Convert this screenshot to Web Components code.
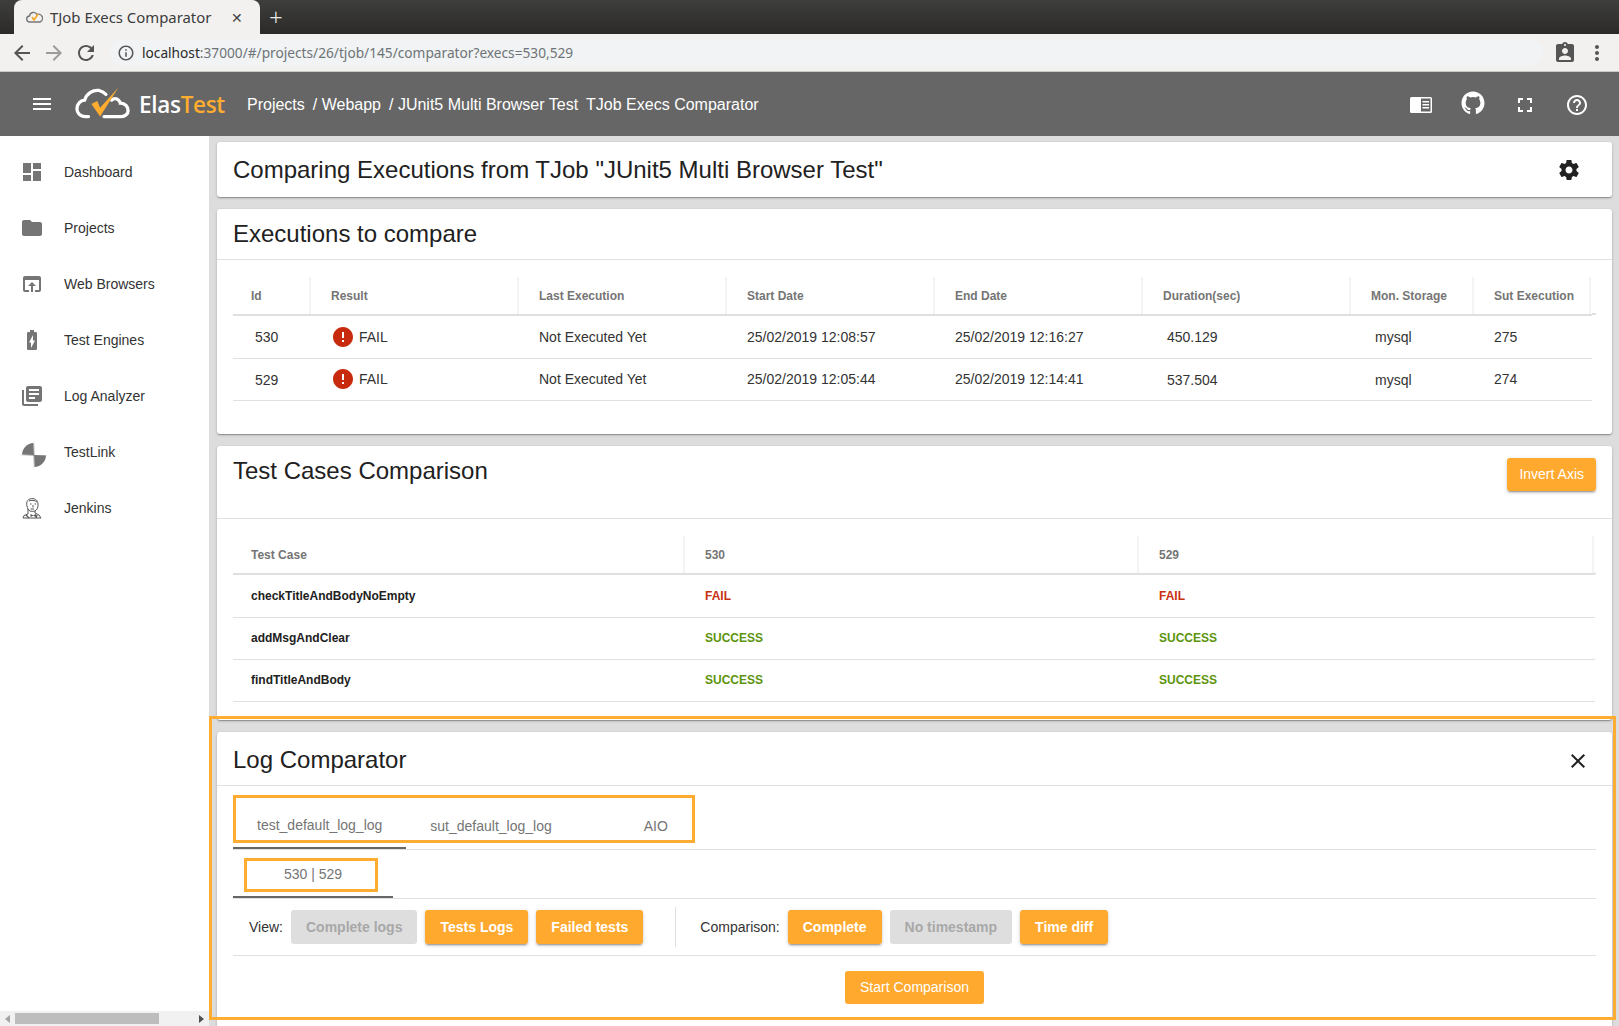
<!DOCTYPE html>
<html lang="en">
<head>
<meta charset="utf-8">
<title>TJob Execs Comparator</title>
<style>
  html, body { margin: 0; height: 100%; overflow: hidden; background: #ddd; }
  body { font-family: "Liberation Sans", Arial, sans-serif; color: #212121; }
  .app { position: relative; display: flex; flex-direction: column; height: 1026px; }
  .main { display: flex; flex: 1; min-height: 0; }
  .content { flex: 1; min-width: 0; display: flex; flex-direction: column; gap: 12px; padding: 6px 7px 0 8px; overflow: hidden; }
  .log-tabs { display: block; }
</style>
</head>
<body>
<div class="app">
  <browser-chrome></browser-chrome>
  <app-header></app-header>
  <div class="main">
    <side-nav>
      <nav-item icon="dashboard">Dashboard</nav-item>
      <nav-item icon="folder">Projects</nav-item>
      <nav-item icon="browser">Web Browsers</nav-item>
      <nav-item icon="battery">Test Engines</nav-item>
      <nav-item icon="books">Log Analyzer</nav-item>
      <nav-item icon="testlink">TestLink</nav-item>
      <nav-item icon="jenkins">Jenkins</nav-item>
    </side-nav>
    <div class="content">
      <et-card style="--head-height:55px" plain>
        <span slot="title">Comparing Executions from TJob "JUnit5 Multi Browser Test"</span>
        <mat-icon slot="actions" name="settings" style="--size:24px;margin-right:31px;color:#212121"></mat-icon>
      </et-card>
      <et-card style="--head-height:51px;--body-height:174px">
        <span slot="title">Executions to compare</span>
        <result-table id="execs" widths="77,208,208,208,208,208,123,119"></result-table>
      </et-card>
      <et-card style="--head-height:73px;--body-height:201px;--title-top:-11px">
        <span slot="title">Test Cases Comparison</span>
        <et-button slot="actions" raised style="margin:0 16px 15px 0;padding:0 12px 2px;--btn-height:31px;--btn-weight:400">Invert Axis</et-button>
        <result-table id="cases" compact widths="451,454,457"></result-table>
      </et-card>
      <et-card style="--head-height:54px;--body-height:234px;--title-top:1px">
        <span slot="title">Log Comparator</span>
        <mat-icon slot="actions" name="close" style="--size:24px;margin:5px 22px 0 0;color:#212121"></mat-icon>
        <div class="log-tabs">
          <tab-bar active="0" style="margin-top:15px">
            <tab-item>test_default_log_log</tab-item>
            <tab-item>sut_default_log_log</tab-item>
            <tab-item>AIO</tab-item>
          </tab-bar>
          <tab-bar active="0">
            <tab-item>530 | 529</tab-item>
          </tab-bar>
          <compare-toolbar></compare-toolbar>
        </div>
      </et-card>
    </div>
  </div>
  <highlight-box style="left:209px;top:716px;width:1407px;height:304px"></highlight-box>
  <highlight-box style="left:233px;top:795px;width:462px;height:48px"></highlight-box>
  <highlight-box style="left:244px;top:858px;width:134px;height:34px"></highlight-box>
</div>

<script>
/**
 * Material style icon paths, 24x24 viewBox.
 */
const ICONS = {
  dashboard: 'M3 13h8V3H3v10zm0 8h8v-6H3v6zm10 0h8V11h-8v10zm0-18v6h8V3h-8z',
  folder: 'M10 4H4c-1.1 0-1.99.9-1.99 2L2 18c0 1.1.9 2 2 2h16c1.1 0 2-.9 2-2V8c0-1.1-.9-2-2-2h-8l-2-2z',
  browser: 'M19 4H5c-1.11 0-2 .9-2 2v12c0 1.1.89 2 2 2h4v-2H5V8h14v10h-4v2h4c1.1 0 2-.9 2-2V6c0-1.1-.89-2-2-2zm-7 6l-4 4h3v6h2v-6h3l-4-4z',
  battery: 'M15.67 4H14V2h-4v2H8.33C7.6 4 7 4.6 7 5.33v15.33C7 21.4 7.6 22 8.33 22h7.33c.74 0 1.34-.6 1.34-1.33V5.33C17 4.6 16.4 4 15.67 4zM11 20v-5.5H9L13 7v5.5h2L11 20z',
  books: 'M4 6H2v14c0 1.1.9 2 2 2h14v-2H4V6zm16-4H8c-1.1 0-2 .9-2 2v12c0 1.1.9 2 2 2h12c1.1 0 2-.9 2-2V4c0-1.1-.9-2-2-2zm-1 9H9V9h10v2zm-4 4H9v-2h6v2zm4-8H9V5h10v2z',
  testlink: 'M12 0.5L12.3 12L23.5 12L12.3 12.3L12 23.5L11.7 12.3L0.5 12L11.7 11.7zM11.6 3a9 9 0 0 0 -8.6 8.6h8.6zM12.4 12.4v8.6a9 9 0 0 0 8.6 -8.6z',
  settings: 'M19.43 12.98c.04-.32.07-.64.07-.98s-.03-.66-.07-.98l2.11-1.65c.19-.15.24-.42.12-.64l-2-3.46c-.12-.22-.39-.3-.61-.22l-2.49 1c-.52-.4-1.08-.73-1.69-.98l-.38-2.65C14.46 2.18 14.25 2 14 2h-4c-.25 0-.46.18-.49.42l-.38 2.65c-.61.25-1.17.59-1.69.98l-2.49-1c-.23-.09-.49 0-.61.22l-2 3.46c-.13.22-.07.49.12.64l2.11 1.65c-.04.32-.07.65-.07.98s.03.66.07.98l-2.11 1.65c-.19.15-.24.42-.12.64l2 3.46c.12.22.39.3.61.22l2.49-1c.52.4 1.08.73 1.69.98l.38 2.65c.03.24.24.42.49.42h4c.25 0 .46-.18.49-.42l.38-2.65c.61-.25 1.17-.59 1.69-.98l2.49 1c.23.09.49 0 .61-.22l2-3.46c.12-.22.07-.49-.12-.64l-2.11-1.65zM12 15.5c-1.93 0-3.5-1.57-3.5-3.5s1.57-3.5 3.5-3.5 3.5 1.57 3.5 3.5-1.57 3.5-3.5 3.5z',
  close: 'M19 6.41L17.59 5 12 10.59 6.41 5 5 6.41 10.59 12 5 17.59 6.41 19 12 13.41 17.59 19 19 17.59 13.41 12z',
  menu: 'M3 18h18v-2H3v2zm0-5h18v-2H3v2zm0-7v2h18V6H3z',
  fullscreen: 'M7 14H5v5h5v-2H7v-3zm-2-4h2V7h3V5H5v5zm12 7h-3v2h5v-5h-2v3zM14 5v2h3v3h2V5h-5z',
  help: 'M11 18h2v-2h-2v2zm1-16C6.48 2 2 6.48 2 12s4.48 10 10 10 10-4.48 10-10S17.52 2 12 2zm0 18c-4.41 0-8-3.59-8-8s3.59-8 8-8 8 3.59 8 8-3.59 8-8 8zm0-14c-2.21 0-4 1.79-4 4h2c0-1.1.9-2 2-2s2 .9 2 2c0 2-3 1.75-3 5h2c0-2.25 3-2.5 3-5 0-2.21-1.79-4-4-4z',
  error: 'M12 2C6.48 2 2 6.48 2 12s4.48 10 10 10 10-4.48 10-10S17.52 2 12 2zm1 15h-2v-2h2v2zm0-4h-2V7h2v6z',
  back: 'M20 11H7.83l5.59-5.59L12 4l-8 8 8 8 1.41-1.41L7.83 13H20v-2z',
  forward: 'M12 4l-1.41 1.41L16.17 11H4v2h12.17l-5.58 5.59L12 20l8-8z',
  reload: 'M17.65 6.35C16.2 4.9 14.21 4 12 4c-4.42 0-7.99 3.58-7.99 8s3.57 8 7.99 8c3.73 0 6.84-2.55 7.73-6h-2.08c-.82 2.33-3.04 4-5.65 4-3.31 0-6-2.69-6-6s2.69-6 6-6c1.66 0 3.14.69 4.22 1.78L13 11h7V4l-2.35 2.35z',
  info: 'M11 7h2v2h-2zm0 4h2v6h-2zm1-9C6.48 2 2 6.48 2 12s4.48 10 10 10 10-4.48 10-10S17.52 2 12 2zm0 18c-4.41 0-8-3.59-8-8s3.59-8 8-8 8 3.59 8 8-3.59 8-8 8z',
  badge: 'M19 3h-4.18C14.4 1.84 13.3 1 12 1c-1.3 0-2.4.84-2.82 2H5c-1.1 0-2 .9-2 2v14c0 1.1.9 2 2 2h14c1.1 0 2-.9 2-2V5c0-1.1-.9-2-2-2zm-7 0c.55 0 1 .45 1 1s-.45 1-1 1-1-.45-1-1 .45-1 1-1zm0 4c1.66 0 3 1.34 3 3s-1.34 3-3 3-3-1.34-3-3 1.34-3 3-3zm6 12H6v-1.4c0-2 4-3.1 6-3.1s6 1.1 6 3.1V19z',
  dots: 'M12 8c1.1 0 2-.9 2-2s-.9-2-2-2-2 .9-2 2 .9 2 2 2zm0 2c-1.1 0-2 .9-2 2s.9 2 2 2 2-.9 2-2-.9-2-2-2zm0 6c-1.1 0-2 .9-2 2s.9 2 2 2 2-.9 2-2-.9-2-2-2z',
  github: 'M12 .5C5.65.5.5 5.65.5 12c0 5.08 3.29 9.39 7.86 10.91.58.11.79-.25.79-.55v-2.14c-3.2.7-3.87-1.36-3.87-1.36-.52-1.33-1.28-1.68-1.28-1.68-1.05-.72.08-.7.08-.7 1.16.08 1.77 1.19 1.77 1.19 1.03 1.76 2.69 1.25 3.35.96.1-.74.4-1.25.73-1.54-2.55-.29-5.24-1.28-5.24-5.69 0-1.26.45-2.28 1.19-3.09-.12-.29-.52-1.46.11-3.05 0 0 .97-.31 3.16 1.18a11 11 0 0 1 5.76 0c2.2-1.49 3.16-1.18 3.16-1.18.63 1.59.23 2.76.11 3.05.74.81 1.19 1.83 1.19 3.09 0 4.42-2.69 5.39-5.25 5.68.41.36.78 1.06.78 2.13v3.16c0 .31.21.67.8.55C20.21 21.39 23.5 17.08 23.5 12 23.5 5.65 18.35.5 12 .5z'
}

/**
 * A single filled icon. Name comes from the name attribute.
 */
customElements.define('mat-icon',
  class extends HTMLElement {
    constructor () {
      super()
      const name = this.getAttribute('name')
      this.attachShadow({ mode: 'open' }).innerHTML = `
        <style>
          :host { display: inline-block; width: var(--size, 24px); height: var(--size, 24px); line-height: 0; flex: none; }
          svg { width: 100%; height: 100%; fill: currentColor; }
        </style>
        <svg viewBox="0 0 24 24"><path d="${ICONS[name]}"/></svg>`
    }
  }
)

const chromeTemplate = document.createElement('template')
chromeTemplate.innerHTML = `
  <style>
    :host { display: block; font-family: "Noto Sans", "Open Sans", sans-serif; }
    .strip { height: 34px; background: linear-gradient(#3e3e3c, #2b2a28); display: flex; align-items: flex-end; padding-left: 14px; }
    .tab { width: 246px; height: 34px; box-sizing: border-box; background: #f2f1f0; border-radius: 8px 8px 0 0; display: flex; align-items: center; padding-left: 12px; color: #3c3c3c; font-size: 14.9px; }
    .tab svg { width: 17px; height: 14px; margin-right: 7px; flex: none; }
    .tab .name { flex: 1; white-space: nowrap; }
    .tab .x { margin-right: 17px; font-size: 14px; color: #444; }
    .plus { color: #e8e8e8; font-size: 24px; font-weight: 300; margin-left: 9px; line-height: 34px; height: 34px; }
    .bar { height: 37px; background: #f3f1ef; border-bottom: 1px solid #c9c9c7; display: flex; align-items: center; padding: 0 10px; }
    .nav { color: #555; margin-right: 8px; --size: 24px; }
    .nav.off { color: #9b9b9b; }
    .url { flex: 1; margin: 0 10px 0 4px; height: 27px; border-radius: 14px; background: #f1f3f4; display: flex; align-items: center; padding-left: 7px; font-size: 13.7px; color: #6e7377; white-space: nowrap; }
    .url b { font-weight: 400; color: #2a2a2a; }
    .url mat-icon { --size: 18px; color: #555; margin: 0 7px 0 0; }
    .tool { color: #555; }
  </style>
  <div class="strip">
    <div class="tab">
      <svg viewBox="0 0 17 14"><path d="M4 12a3 3 0 0 1 -.5-6a4 4 0 0 1 7.5-1.5a3.5 3.5 0 0 1 3 7.5z" fill="none" stroke="#777" stroke-width="1.4"/><path d="M6 7l2 3l4-6" fill="none" stroke="#f5a623" stroke-width="1.6"/></svg>
      <span class="name">TJob Execs Comparator</span>
      <span class="x">✕</span>
    </div>
    <span class="plus">+</span>
  </div>
  <div class="bar">
    <mat-icon class="nav" name="back"></mat-icon>
    <mat-icon class="nav off" name="forward"></mat-icon>
    <mat-icon class="nav" name="reload"></mat-icon>
    <div class="url">
      <mat-icon name="info"></mat-icon>
      <span><b>localhost</b>:37000/#/projects/26/tjob/145/comparator?execs=530,529</span>
    </div>
    <mat-icon class="tool" name="badge" style="margin-right:8px"></mat-icon>
    <mat-icon class="tool" name="dots"></mat-icon>
  </div>
`

/**
 * The browser window frame around the page.
 */
customElements.define('browser-chrome',
  class extends HTMLElement {
    constructor () {
      super()
      this.attachShadow({ mode: 'open' }).appendChild(chromeTemplate.content.cloneNode(true))
    }
  }
)

const headerTemplate = document.createElement('template')
headerTemplate.innerHTML = `
  <style>
    :host { display: flex; align-items: center; height: 64px; background: #666; color: #fff; padding-left: 30px; }
    .menu { color: #fff; }
    .logo { width: 56px; height: 34px; margin-left: 21px; flex: none; }
    .brand { font-family: "Open Sans", sans-serif; font-size: 22.5px; font-weight: 600; margin-left: 8px; width: 108px; letter-spacing: -.3px; }
    .brand span { color: #ffac2f; }
    .crumbs { font-size: 16px; white-space: nowrap; display: flex; margin-top: 1px; }
    .crumbs span { margin-right: 8px; }
    .spacer { flex: 1; }
    .tools { display: flex; align-items: center; padding-top: 1px; }
    .tools > * { width: 52px; display: flex; justify-content: center; }
  </style>
  <mat-icon class="menu" name="menu"></mat-icon>
  <svg class="logo" viewBox="0 0 58 34">
    <g fill="none" stroke="#fff" stroke-width="3.4" stroke-linecap="round">
      <path d="M14 30H11C5 30 2 26 2 22C2 17 6 13 10 13C12 6 19 2 25 3C28 4 30 5 32 7"/>
      <path d="M38 13C40 11 43 11 45 13C46 14 47 15 47 16C52 16 55 20 55 24C55 27 52 30 48 30H30"/>
    </g>
    <path d="M17 17L23 14L26 21L45 0L26 30z" fill="#ffac2f"/>
  </svg>
  <div class="brand">Elas<span>Test</span></div>
  <div class="crumbs"><span>Projects</span><span>/ Webapp</span><span>/ JUnit5 Multi Browser Test</span><span>TJob Execs Comparator</span></div>
  <div class="spacer"></div>
  <div class="tools">
    <div><svg width="24" height="18" viewBox="0 0 24 18"><rect x="1" y="1" width="22" height="16" rx="1.5" fill="#fff"/><rect x="12" y="2.5" width="9.5" height="13" fill="#666"/><path d="M13.5 5h6.5v1.4h-6.5zm0 3h6.5v1.4h-6.5zm0 3h6.5v1.4h-6.5z" fill="#fff"/></svg></div>
    <div><mat-icon name="github" style="--size:24px;margin-top:-4px"></mat-icon></div>
    <div><mat-icon name="fullscreen"></mat-icon></div>
    <div style="margin-right:16px"><mat-icon name="help"></mat-icon></div>
  </div>
`

/**
 * The top bar with the logo, the breadcrumbs and the tools.
 */
customElements.define('app-header',
  class extends HTMLElement {
    constructor () {
      super()
      this.attachShadow({ mode: 'open' }).appendChild(headerTemplate.content.cloneNode(true))
    }
  }
)

const sideTemplate = document.createElement('template')
sideTemplate.innerHTML = `
  <style>
    :host { display: flex; flex-direction: column; width: 209px; background: #fff; flex: none; }
    .items { flex: 1; padding-top: 8px; }
    .scroll { height: 15px; background: #f1f1f1; display: flex; align-items: center; }
    .arrow { width: 0; height: 0; border-style: solid; border-width: 4px 0; border-color: transparent; margin: 0 5px; flex: none; }
    .arrow.left { border-right: 5px solid #a3a3a3; }
    .arrow.right { border-left: 5px solid #505050; }
    .thumb { width: 144px; height: 11px; background: #bdbdbd; }
    .rest { flex: 1; }
  </style>
  <div class="items"><slot></slot></div>
  <div class="scroll"><span class="arrow left"></span><span class="thumb"></span><span class="rest"></span><span class="arrow right"></span></div>
`

/**
 * The left column with the sections of the application.
 */
customElements.define('side-nav',
  class extends HTMLElement {
    constructor () {
      super()
      this.attachShadow({ mode: 'open' }).appendChild(sideTemplate.content.cloneNode(true))
    }
  }
)

/**
 * One link of the side-nav. The Jenkins butler is drawn by hand, the rest are paths.
 */
customElements.define('nav-item',
  class extends HTMLElement {
    constructor () {
      super()
      const icon = this.getAttribute('icon')
      const glyph = icon === 'jenkins'
        ? `<svg width="24" height="24" viewBox="0 0 24 24" fill="none" stroke="#555" stroke-width="1"><path d="M8 13C6 9 6 4 10 3C14 1.5 18 4 18 8C18.500 11 17 14 15 15L15 17L19 19L21 22L3 22L4 19.500L8 18z"/><path d="M8 13C9 15 11 16 15 15M10 8h1.500M14.500 8h1.500M13 9v2.500M10.500 13h3.500M9 5C11 4 15 4 17 6"/><path d="M6 19l3 3M17 19l-1 3" stroke-width="1.300"/><path d="M10.500 18l3 1.500-3 1.500zM16 18l-3 1.500 3 1.500z" fill="#555" stroke="none"/></svg>`
        : `<mat-icon name="${icon}"></mat-icon>`
      this.attachShadow({ mode: 'open' }).innerHTML = `
        <style>
          :host { display: flex; align-items: center; height: 56px; padding-left: 20px; gap: 20px; font-size: 14px; color: #333; }
          mat-icon { color: #757575; }
          mat-icon[name="testlink"] { --size: 32px; margin: 6px -6px 0 -2px; }
        </style>
        ${glyph}<slot></slot>`
    }
  }
)

const cardTemplate = document.createElement('template')
cardTemplate.innerHTML = `
  <style>
    :host { display: block; background: #fff; border-radius: 3px; flex: none; box-shadow: 0 1px 3px rgba(0,0,0,.2), 0 1px 1px rgba(0,0,0,.14), 0 2px 1px -1px rgba(0,0,0,.12); }
    .head { height: var(--head-height, 50px); display: flex; align-items: center; justify-content: space-between; border-bottom: 1px solid #e0e0e0; box-sizing: border-box; padding-left: 16px; font-size: 24px; color: #212121; }
    :host([plain]) .head { border-bottom: none; }
    .title { position: relative; top: var(--title-top, 0); }
    .body { height: var(--body-height, auto); padding: 0 16px; }
    :host([plain]) .body { display: none; }
  </style>
  <div class="head"><div class="title"><slot name="title"></slot></div><slot name="actions"></slot></div>
  <div class="body"><slot></slot></div>
`

/**
 * A material card with a title row, optional actions and a body.
 */
customElements.define('et-card',
  class extends HTMLElement {
    constructor () {
      super()
      this.attachShadow({ mode: 'open' }).appendChild(cardTemplate.content.cloneNode(true))
    }
  }
)

/**
 * Grey header table. Columns and rows are set with setData.
 */
customElements.define('result-table',
  class extends HTMLElement {
    constructor () {
      super()
      this.attachShadow({ mode: 'open' })
    }

    /**
     * Renders the table.
     *
     * @param {string[]} head - The column titles.
     * @param {string[][]} rows - The cells, as html.
     */
    setData (head, rows) {
      const widths = this.getAttribute('widths').split(',')
      this.shadowRoot.innerHTML = `
        <style>
          :host { display: block; padding-top: 17px; }
          table { border-collapse: collapse; table-layout: fixed; width: ${widths.reduce((a, b) => a + Number(b), 0)}px; }
          th { height: 38px; padding: 0 0 0 20px; text-align: left; font-size: 12px; font-weight: 700; color: #757575; border-right: 2px solid #f4f4f4; border-bottom: 2px solid #e0e0e0; white-space: nowrap; box-sizing: border-box; }
          th:first-child { padding-left: 18px; }
          th:last-child { border-right: none; position: relative; }
          th:last-child::before { content: ''; position: absolute; top: 0; bottom: 0; right: 1px; width: 2px; background: #f4f4f4; }
          th:last-child::after { content: ''; position: absolute; left: 100%; bottom: -1px; width: 4px; height: 2px; background: #e0e0e0; }
          :host([compact]) th:last-child::after { width: 1px; }
          td { height: 42px; padding: 0 0 0 21px; font-size: 14px; color: #333; border-bottom: 1px solid #e0e0e0; white-space: nowrap; box-sizing: border-box; }
          tr:first-child td { height: 43px; padding-top: 1px; }
          td.pad { padding-left: 25px; }
          tr td.low { padding-top: 2px; }
          td:first-child { padding-left: 22px; }
          :host([compact]) td { font-size: 12px; font-weight: 700; }
          :host([compact]) td:first-child { padding-left: 18px; color: #212121; }
          .fail { color: #c8300f; }
          .success { color: #5c940d; }
          .state { display: flex; align-items: center; gap: 4px; }
          mat-icon { color: #c82a0e; }
        </style>
        <table>
          <colgroup>${widths.map((w) => `<col style="width:${w}px">`).join('')}</colgroup>
          <thead><tr>${head.map((h) => `<th>${h}</th>`).join('')}</tr></thead>
          <tbody>${rows.map((r) => `<tr>${r.join('')}</tr>`).join('')}</tbody>
        </table>`
    }
  }
)

/**
 * A flat or raised button in the accent colour.
 */
customElements.define('et-button',
  class extends HTMLElement {
    constructor () {
      super()
      this.attachShadow({ mode: 'open' }).innerHTML = `
        <style>
          :host { display: inline-flex; align-items: center; justify-content: center; height: var(--btn-height, 34px); padding: 0 15px; background: #ffa92f; color: #fff; border-radius: 3px; font-size: 14px; font-weight: var(--btn-weight, 700); white-space: nowrap; flex: none; box-sizing: content-box; }
          :host([raised]) { box-shadow: 0 3px 1px -2px rgba(0,0,0,.2), 0 2px 2px 0 rgba(0,0,0,.14), 0 1px 5px 0 rgba(0,0,0,.12); }
          :host([disabled]) { background: #dedede; color: #a8a8a8; box-shadow: none; }
        </style>
        <slot></slot>`
    }
  }
)

customElements.define('tab-bar',
  class extends HTMLElement {
    constructor () {
      super()
      this.attachShadow({ mode: 'open' }).innerHTML = `
        <style>
          :host { display: flex; border-bottom: 1px solid #e0e0e0; height: 49px; box-sizing: border-box; }
          ::slotted(tab-item:first-child) { border-bottom: 2px solid #666; }
        </style>
        <slot></slot>`
    }
  }
)

customElements.define('tab-item',
  class extends HTMLElement {
    constructor () {
      super()
      this.attachShadow({ mode: 'open' }).innerHTML = `
        <style>
          :host { display: flex; align-items: center; justify-content: center; height: 48px; box-sizing: border-box; min-width: 160px; padding: 1px 24px 0; font-size: 14px; color: #757575; white-space: nowrap; }
        </style>
        <slot></slot>`
    }
  }
)

const toolbarTemplate = document.createElement('template')
toolbarTemplate.innerHTML = `
  <style>
    :host { display: block; font-size: 14px; color: #333; }
    .row { display: flex; align-items: center; height: 57px; border-bottom: 1px solid #e0e0e0; padding-left: 16px; box-sizing: border-box; gap: 8px; }
    .sep { width: 1px; height: 40px; background: #e0e0e0; margin: 0 16px 0 24px; }
    .start { display: flex; justify-content: center; padding-top: 15px; }
  </style>
  <div class="row">
    <span>View:</span>
    <et-button disabled>Complete logs</et-button>
    <et-button raised>Tests Logs</et-button>
    <et-button raised>Failed tests</et-button>
    <div class="sep"></div>
    <span>Comparison:</span>
    <et-button raised>Complete</et-button>
    <et-button disabled>No timestamp</et-button>
    <et-button raised>Time diff</et-button>
  </div>
  <div class="start"><et-button style="--btn-weight:400;--btn-height:31px;padding-bottom:2px">Start Comparison</et-button></div>
`

/**
 * View and comparison switches of the log comparator.
 */
customElements.define('compare-toolbar',
  class extends HTMLElement {
    constructor () {
      super()
      this.attachShadow({ mode: 'open' }).appendChild(toolbarTemplate.content.cloneNode(true))
    }
  }
)

/**
 * Orange annotation frame, lies over the page.
 */
customElements.define('highlight-box',
  class extends HTMLElement {
    constructor () {
      super()
      this.attachShadow({ mode: 'open' }).innerHTML = `
        <style>
          :host { position: absolute; box-sizing: border-box; border: 3px solid #ffac33; pointer-events: none; }
        </style>`
    }
  }
)

const fail = '<div class="state"><mat-icon name="error"></mat-icon>FAIL</div>'
const td = (html, cls = '') => `<td class="${cls}">${html}</td>`

document.querySelector('#execs').setData(
  ['Id', 'Result', 'Last Execution', 'Start Date', 'End Date', 'Duration(sec)', 'Mon. Storage', 'Sut Execution'],
  [
    [td('530'), td(fail), td('Not Executed Yet'), td('25/02/2019 12:08:57'), td('25/02/2019 12:16:27'), td('450.129', 'pad'), td('mysql', 'pad'), td('275')],
    [td('529', 'low'), td(fail), td('Not Executed Yet'), td('25/02/2019 12:05:44'), td('25/02/2019 12:14:41'), td('537.504', 'pad low'), td('mysql', 'pad low'), td('274')]
  ]
)

document.querySelector('#cases').setData(
  ['Test Case', '530', '529'],
  [
    [td('checkTitleAndBodyNoEmpty'), td('FAIL', 'fail'), td('FAIL', 'fail')],
    [td('addMsgAndClear'), td('SUCCESS', 'success'), td('SUCCESS', 'success')],
    [td('findTitleAndBody'), td('SUCCESS', 'success'), td('SUCCESS', 'success')]
  ]
)
</script>
</body>
</html>
